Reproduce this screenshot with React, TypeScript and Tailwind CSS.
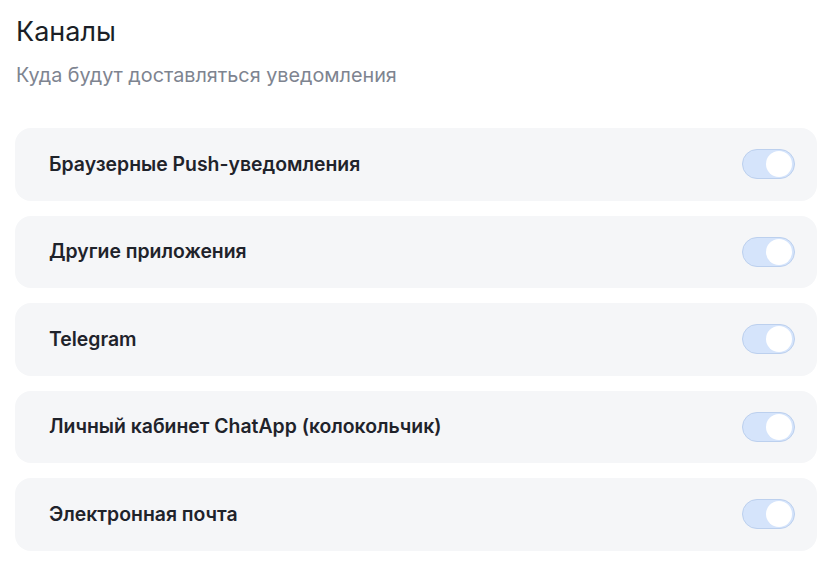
import React from "react";

const items = [
  "Браузерные Push-уведомления",
  "Другие приложения",
  "Telegram",
  "Личный кабинет ChatApp (колокольчик)",
  "Электронная почта",
];

function Toggle() {
  return (
    <div className="relative h-[30px] w-[53px] shrink-0 rounded-full border border-[#bcd0ee] bg-[#d5e4fb]">
      <div className="absolute right-[2px] top-[1px] h-[26px] w-[26px] rounded-full bg-white" />
    </div>
  );
}

export default function App() {
  return (
    <div
      className="min-h-[576px] w-[837px] bg-white pl-[15px] pr-[20px] pt-[16px]"
      style={{ fontFamily: "Inter, 'Noto Sans', sans-serif" }}
    >
      <h1 className="pl-[1px] text-[27px] leading-[32px] font-normal text-[#1b1f27]">Каналы</h1>
      <p className="mt-[15px] pl-[1px] text-[19.8px] leading-[24px] text-[#7e8490]">
        Куда будут доставляться уведомления
      </p>
      <div className="mt-[41px] flex flex-col gap-[15px]">
        {items.map((t) => (
          <div
            key={t}
            className="flex h-[72.5px] items-center justify-between rounded-[16px] bg-[#f5f6f8] pl-[34px] pr-[22px]"
          >
            <span className="text-[19.4px] font-semibold text-[#1f232b]">{t}</span>
            <Toggle />
          </div>
        ))}
      </div>
    </div>
  );
}
